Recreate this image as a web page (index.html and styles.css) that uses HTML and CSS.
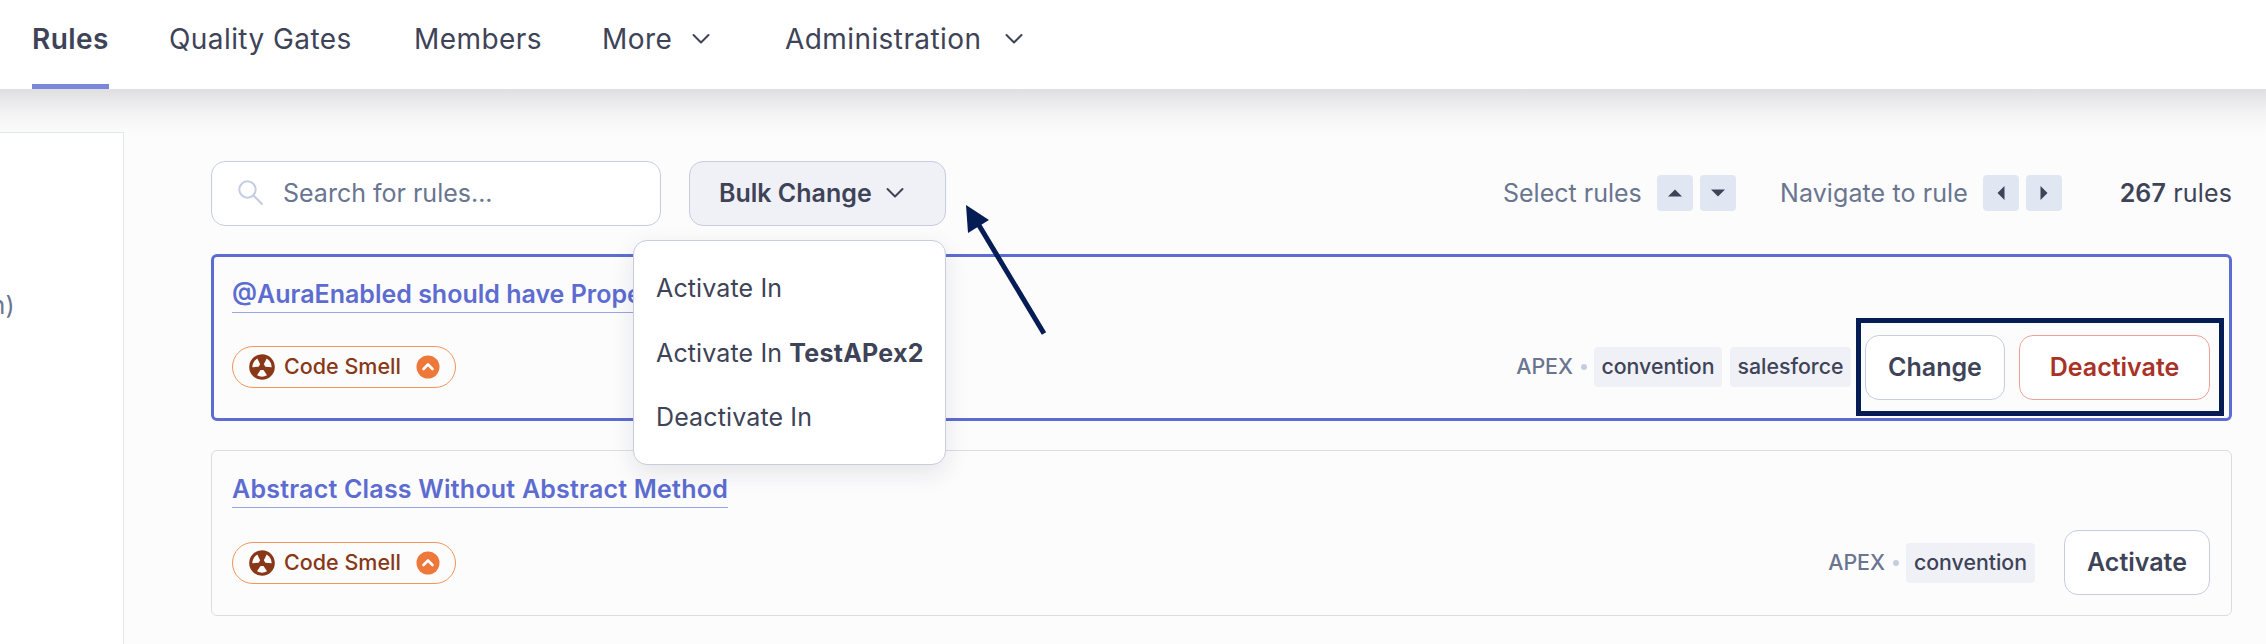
FILE: index.html
```html
<!DOCTYPE html>
<html lang="en">
<head>
<meta charset="utf-8">
<title>Rules</title>
<link rel="stylesheet" href="styles.css">
</head>
<body>
<svg class="defs" width="0" height="0" aria-hidden="true">
  <symbol id="chevron" viewBox="0 0 18 12"><path d="M1.5 2 L9 9.5 L16.500 2" fill="none" stroke="currentColor" stroke-width="2" stroke-linecap="round" stroke-linejoin="round"/></symbol>
  <symbol id="smell" viewBox="0 0 26 26">
    <circle cx="13" cy="13" r="12.800" fill="#883816"/>
    <g fill="#fcfcfd">
      <path d="M11.500 16 L14.500 16 L18 21.300 Q13 24 8 21.300 Z"/>
      <path d="M11.500 16 L14.500 16 L18 21.300 Q13 24 8 21.300 Z" transform="rotate(120 13 13)"/>
      <path d="M11.500 16 L14.500 16 L18 21.300 Q13 24 8 21.300 Z" transform="rotate(240 13 13)"/>
    </g>
  </symbol>
  <symbol id="major" viewBox="0 0 24 24"><circle cx="12" cy="12" r="11.500" fill="#ed7839"/><path d="M7.500 14 L12 9.500 L16.500 14" fill="none" stroke="#fff" stroke-width="2.600" stroke-linecap="round" stroke-linejoin="round"/></symbol>
</svg>
<nav class="nav">
  <a class="tab active">Rules</a>
  <a class="tab gates">Quality Gates</a>
  <a class="tab members">Members</a>
  <a class="tab more">More<svg class="chev"><use href="#chevron"/></svg></a>
  <a class="tab admin">Administration<svg class="chev"><use href="#chevron"/></svg></a>
</nav>
<div class="page">
  <aside class="side"><span class="facet">n)</span></aside>
  <main class="main">
    <div class="toolbar">
      <div class="search">
        <svg class="glass" viewBox="0 0 26 26"><circle cx="9.500" cy="9.500" r="8.200"/><path d="M15.500 15.500 L24 24"/></svg>
        <span>Search for rules...</span>
      </div>
      <div class="bulk">
        <button class="btn bulk-btn">Bulk Change<svg class="chev"><use href="#chevron"/></svg></button>
        <div class="menu">
          <div class="item">Activate In</div>
          <div class="item">Activate In <b>TestAPex2</b></div>
          <div class="item">Deactivate In</div>
        </div>
        <svg class="arrow" viewBox="0 0 90 140"><path d="M84 133.500 L17 22" stroke="#051c55" stroke-width="5"/><path d="M6 5 L29 20 L8 33 Z" fill="#051c55"/></svg>
      </div>
      <div class="hints">
        <span class="hint select">Select rules</span>
        <span class="key"><svg viewBox="0 0 14 8"><path d="M0 7.500 L7 .5 L14 7.500Z"/></svg></span>
        <span class="key"><svg viewBox="0 0 14 8"><path d="M0 .5 L7 7.500 L14 .5Z"/></svg></span>
        <span class="hint navigate">Navigate to rule</span>
        <span class="key"><svg class="v" viewBox="0 0 8 14"><path d="M7.500 0 L.5 7 L7.500 14Z"/></svg></span>
        <span class="key"><svg class="v" viewBox="0 0 8 14"><path d="M.5 0 L7.500 7 L.5 14Z"/></svg></span>
        <span class="count"><b>267</b> rules</span>
      </div>
    </div>
    <section class="card selected">
      <a class="title">@AuraEnabled should have Proper</a>
      <div class="row">
        <span class="pill"><svg class="smell"><use href="#smell"/></svg><span class="pill-text">Code Smell</span><svg class="major"><use href="#major"/></svg></span>
        <div class="meta">
          <span class="lang">APEX</span><i class="dot"></i>
          <span class="tag">convention</span><span class="tag second">salesforce</span>
          <div class="actions"><button class="btn change">Change</button><button class="btn danger">Deactivate</button></div>
        </div>
      </div>
    </section>
    <section class="card">
      <a class="title">Abstract Class Without Abstract Method</a>
      <div class="row">
        <span class="pill"><svg class="smell"><use href="#smell"/></svg><span class="pill-text">Code Smell</span><svg class="major"><use href="#major"/></svg></span>
        <div class="meta">
          <span class="lang">APEX</span><i class="dot"></i>
          <span class="tag">convention</span>
          <button class="btn activate">Activate</button>
        </div>
      </div>
    </section>
  </main>
</div>
</body>
</html>
```

FILE: styles.css
```css
* { box-sizing: border-box; }
body { margin: 0; width: 2266px; height: 644px; overflow: hidden; background: #fcfcfd; color: #3e4357; font: 400 25px/36px Inter, sans-serif; }
b { font-weight: 600; }
.defs { position: absolute; }
.nav { display: flex; height: 89px; padding-left: 32px; background: #fff; font-size: 28px; letter-spacing: .42px; }
.tab { display: flex; height: 89px; padding-top: 21px; white-space: nowrap; }
.tab.active { width: 77px; font-weight: 600; border-bottom: 5px solid #7b87d9; }
.gates { width: 245px; margin-left: 60px; }
.members { width: 188px; }
.more { width: 183px; }
.chev { flex: none; width: 18px; height: 12px; }
.tab .chev { margin: 12px 0 0 20px; }
.admin .chev { margin-left: 24px; }
.page { display: flex; height: 555px; padding-top: 43px; background: linear-gradient(#dfdfe2 0, #e9e9eb 12px, #f3f3f4 24px, #f9f9fa 36px, #fcfcfd 48px); }
.side { flex: none; width: 124px; height: 530px; padding-top: 154px; background: #fff; border: solid #e1e6f3; border-width: 1px 1px 0 0; color: #6a7590; }
.facet { display: flex; justify-content: flex-end; width: 14.500px; }
.main { width: 2021px; margin-left: 87px; padding-top: 29px; }
.toolbar { display: flex; height: 65px; margin-bottom: 28px; }
.search { display: flex; align-items: center; width: 450px; padding: 0 0 1px 26px; gap: 19px; background: #fff; border: 1px solid #c5cdde; border-radius: 14px; color: #6a7590; }
.glass { width: 26px; height: 26px; fill: none; stroke: #c5cdde; stroke-width: 2; stroke-linecap: round; }
.bulk { position: relative; width: 257px; margin-left: 28px; }
.btn { display: flex; align-items: center; justify-content: center; height: 65px; padding: 0 0 1px; background: #fff; border: 1px solid #c5cdde; border-radius: 14px; color: #3e4357; font: 600 25px/36px Inter, sans-serif; }
.bulk-btn { width: 257px; gap: 14px; justify-content: flex-start; padding-left: 29px; background: #eff1f7; }
.menu { position: absolute; z-index: 2; top: 79px; right: 0; width: 313px; height: 225px; padding: 15px 22px; background: #fff; border: 1px solid #c5cdde; border-radius: 14px; box-shadow: 0 8px 24px rgba(29, 33, 47, .1); }
.item { display: flex; align-items: center; height: 64.500px; white-space: pre; letter-spacing: .13px; }
.item b { font-weight: 700; letter-spacing: .25px; }
.arrow { position: absolute; z-index: 3; top: 39px; left: 271px; width: 90px; height: 140px; }
.hints { display: flex; align-items: center; margin-left: auto; padding-bottom: 1px; white-space: nowrap; }
.hint { color: #6a7590; }
.select { width: 154px; }
.navigate { width: 203px; margin-left: 44px; letter-spacing: .1px; }
.key { display: flex; align-items: center; justify-content: center; width: 36px; height: 36px; background: #e1e6f3; border-radius: 4px; }
.key + .key { margin-left: 7px; }
.key svg { width: 14px; height: 8px; fill: #3e4357; }
.key .v { width: 8px; height: 14px; }
.count { width: 113px; margin-left: 57px; text-align: right; letter-spacing: .15px; }
.card { height: 166px; padding: 20px 21px 0 20px; border: 1px solid #dddddd; border-radius: 6px; }
.card.selected { height: 167px; margin-bottom: 29px; padding: 19px 19px 0 18px; border: 3px solid #5d6cd0; }
.title { display: block; width: fit-content; height: 37px; color: #5d6cd0; font-weight: 600; letter-spacing: .21px; line-height: 36px; border-bottom: 1px solid #9ba4e4; white-space: nowrap; }
.selected .title { letter-spacing: 0; }
.row { display: flex; align-items: center; height: 65px; margin-top: 22px; }
.selected .row { margin-top: 21px; }
.pill { display: flex; align-items: center; width: 224px; height: 42px; padding-left: 16px; border: 1px solid #f0975a; border-radius: 21px; color: #883816; font-size: 21.500px; font-weight: 500; }
.smell { width: 26px; height: 26px; }
.pill-text { width: 132px; padding: 0 0 1px 9px; white-space: nowrap; }
.major { width: 24px; height: 24px; margin-left: 9px; }
.meta { display: flex; align-items: center; margin-left: auto; font-size: 21.300px; font-weight: 500; }
.lang { padding-bottom: 1px; color: #6a7590; font-size: 21.400px; }
.dot { width: 6px; height: 6px; margin: 0 7px 0 8px; border-radius: 50%; background: #c5cdde; }
.tag { width: 129px; padding: 1px 0 3px; background: #eff1f7; border-radius: 4px; text-align: center; }
.selected .tag { width: 128px; }
.selected .second { width: 121px; margin-left: 8px; }
.actions { display: flex; gap: 14px; margin: 0 -14px 0 5px; padding: 12px 9px 11px 4px; border: 5px solid #051c55; }
.change { width: 140px; }
.danger { width: 191px; color: #a93226; border-color: #f0a098; }
.activate { width: 146px; margin-left: 29px; }
```
